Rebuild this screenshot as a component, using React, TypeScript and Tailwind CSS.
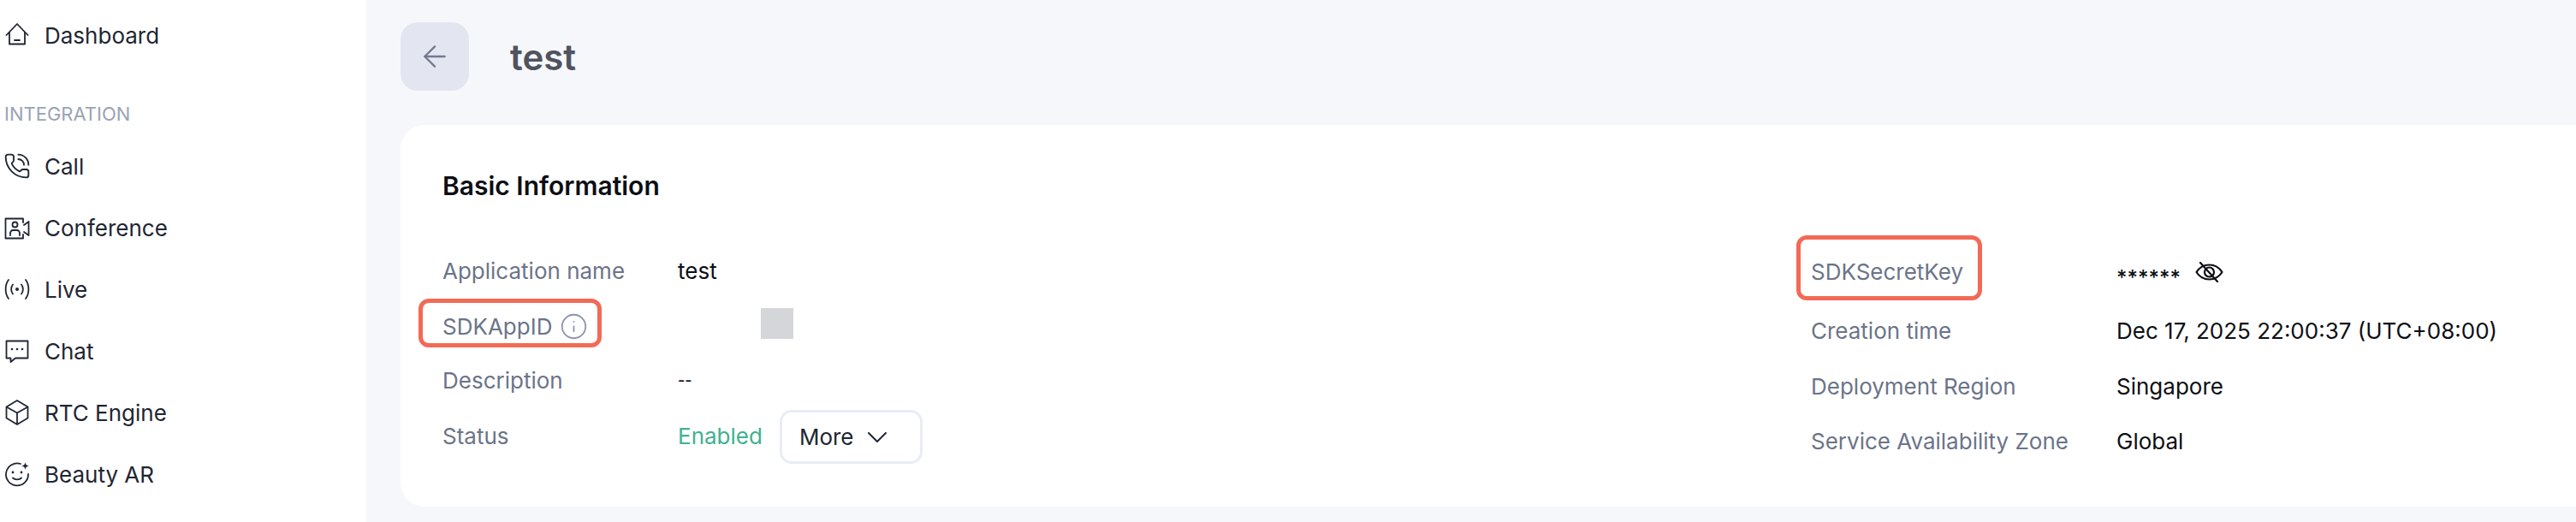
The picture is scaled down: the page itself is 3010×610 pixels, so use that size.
import { ArrowLeft, ChevronDown, Info, PhoneCall } from 'lucide-react';
import type { ReactNode } from 'react';

const ICON = 'w-[30px] h-[30px] shrink-0 text-[#1f2633]';

function HomeIcon() {
    return (
        <svg className={ICON} viewBox="0 0 30 30" fill="none" stroke="currentColor" strokeWidth={1.8} strokeLinejoin="round" strokeLinecap="round">
            <path d="M2.500 15 15 2l12.500 13" />
            <path d="M6 12v13.500h18V12" />
            <path d="M12 21h6" />
        </svg>
    );
}
function CallIcon() {
    return <PhoneCall className="w-[32px] h-[32px] -m-px shrink-0 text-[#1f2633]" strokeWidth={1.4} />;
}
function ConferenceIcon() {
    return (
        <svg className={ICON} viewBox="0 0 30 30" fill="none" stroke="currentColor" strokeWidth={1.8} strokeLinejoin="round" strokeLinecap="round">
            <path d="M22 9V4.500H1.500v23H22V23" />
            <circle cx="12.500" cy="11.500" r="3" />
            <path d="M7 24v-2.500c0-2 1.500-3.500 3-3.500h5c1.500 0 3 1.500 3 3.500V24" />
            <path d="M23 12 28.500 8v16L23 20" />
        </svg>
    );
}
function LiveIcon() {
    return (
        <svg className={ICON} viewBox="0 0 30 30" fill="none" stroke="currentColor" strokeWidth={1.8} strokeLinecap="round">
            <circle cx="15" cy="15" r="2" fill="currentColor" stroke="none" />
            <path d="M10 9.500c-2.500 3-2.500 8 0 11" />
            <path d="M20 9.500c2.500 3 2.500 8 0 11" />
            <path d="M5 4c-4.500 6-4.500 16 0 22" />
            <path d="M25 4c4.500 6 4.500 16 0 22" />
        </svg>
    );
}
function ChatIcon() {
    return (
        <svg className={ICON} viewBox="0 0 30 30" fill="none" stroke="currentColor" strokeWidth={1.8} strokeLinejoin="round">
            <path d="M2.500 3.500h25v20H13L7.500 28v-4.500h-5Z" />
            <circle cx="9" cy="13" r="1.300" fill="currentColor" stroke="none" />
            <circle cx="15" cy="13" r="1.300" fill="currentColor" stroke="none" />
            <circle cx="21" cy="13" r="1.300" fill="currentColor" stroke="none" />
        </svg>
    );
}
function CubeIcon() {
    return (
        <svg className={ICON} viewBox="0 0 30 30" fill="none" stroke="currentColor" strokeWidth={1.8} strokeLinejoin="round">
            <path d="M15 1 27.500 8.500v13L15 29 2.500 21.500v-13Z" />
            <path d="M2.500 8.500 15 15.500l12.500-7" />
            <path d="M15 15.500V29" />
        </svg>
    );
}
function BeautyIcon() {
    return (
        <svg className={ICON} viewBox="0 0 30 30" fill="none" stroke="currentColor" strokeWidth={1.8} strokeLinecap="round">
            <path d="M19 3A13 13 0 1 0 28 15" />
            <path d="M10 19.500c2.500 2.500 7.500 2.500 10 0" />
            <circle cx="10" cy="13" r="1.400" fill="currentColor" stroke="none" />
            <circle cx="20" cy="13" r="1.400" fill="currentColor" stroke="none" />
            <path d="M24.500 1c.5 3 1.500 4 4.500 4.500-3 .5-4 1.500-4.500 4.500-.5-3-1.500-4-4.500-4.500 3-.5 4-1.500 4.500-4.500Z" fill="currentColor" stroke="none" />
        </svg>
    );
}
function EyeOffIcon() {
    return (
        <svg className="w-[33px] h-[24px] shrink-0 text-[#0d0f14]" viewBox="0 0 33 24" fill="none" stroke="currentColor" strokeWidth={2.2} strokeLinejoin="round" strokeLinecap="round">
            <path d="M1.500 12C5 6.500 10 3.500 16.500 3.500S28 6.500 31.500 12C28 17.500 23 20.500 16.500 20.500S5 17.500 1.500 12Z" />
            <circle cx="16.500" cy="12" r="5.500" />
            <path d="M6 1l20 22" />
        </svg>
    );
}

const NAV_GROUP = [
    { label: 'Call', icon: <CallIcon /> },
    { label: 'Conference', icon: <ConferenceIcon /> },
    { label: 'Live', icon: <LiveIcon /> },
    { label: 'Chat', icon: <ChatIcon /> },
    { label: 'RTC Engine', icon: <CubeIcon /> },
    { label: 'Beauty AR', icon: <BeautyIcon /> },
];

function NavItem({ label, icon }: { label: string; icon: ReactNode }) {
    return (
        <div className="h-[72px] flex items-center gap-[17px] pl-[5px] text-[26px] text-[#1f2633]">
            {icon}
            <span>{label}</span>
        </div>
    );
}

function Row({ label, children, labelWidth, className = '' }: { label: ReactNode; children: ReactNode; labelWidth: string; className?: string }) {
    return (
        <div className={`flex items-center h-[65px] text-[26px] text-[#0d0f14] ${className}`}>
            <div className={`shrink-0 text-[#6b7489] ${labelWidth}`}>{label}</div>
            {children}
        </div>
    );
}

// red annotation drawn over the label
function Marked({ children, className }: { children: ReactNode; className: string }) {
    return (
        <span className="relative inline-flex items-center gap-2">
            {children}
            <span className={`absolute border-[5px] border-[#f26a56] rounded-[12px] ${className}`} />
        </span>
    );
}

export default function App() {
    return (
        <div className="w-[3010px] h-[610px] overflow-hidden flex bg-[#f5f7fb] font-['Inter',sans-serif]">
            {/* Sidebar */}
            <aside className="w-[428px] shrink-0 bg-white pt-[5px]">
                <NavItem label="Dashboard" icon={<HomeIcon />} />
                <div className="mt-[38px] pl-[5px] h-[36px] flex items-center text-[22px] text-[#9aa3b5]">INTEGRATION</div>
                <div className="mt-[7px]">
                    {NAV_GROUP.map(n => <NavItem key={n.label} label={n.label} icon={n.icon} />)}
                </div>
            </aside>

            {/* Main */}
            <main className="flex-1 min-w-0 pl-[40px] pt-[26px]">
                <div className="flex items-center gap-[48px] h-[80px]">
                    <button className="w-[80px] h-[80px] rounded-[20px] bg-[#e3e6f0] flex items-center justify-center text-[#727a8e]">
                        <ArrowLeft size={40} strokeWidth={1.4} />
                    </button>
                    <h1 className="text-[42px] font-semibold text-[#50535f]">test</h1>
                </div>

                <section className="mt-[40px] h-[446px] rounded-l-[28px] bg-white pl-[49px] pt-[51px]">
                    <h2 className="text-[30px] leading-[40px] font-semibold text-[#0d0f14]">Basic Information</h2>
                    <div className="mt-[47px] flex">
                        <div className="w-[1599px] shrink-0">
                            <Row label="Application name" labelWidth="w-[275px]">
                                <span>test</span>
                            </Row>
                            <Row
                                label={
                                    <Marked className="-left-[28px] -right-[19px] -top-[13px] -bottom-[5px]">
                                        SDKAppID
                                        <Info className="ml-[1px] -my-[3px] -mr-[3px] text-[#8a93ab]" size={33} strokeWidth={1.3} />
                                    </Marked>
                                }
                                labelWidth="w-[275px]"
                            >
                                <span className="ml-[97px] w-[38px] h-[36px] -mt-[8px] bg-[#d5d6da]" />
                            </Row>
                            <Row label="Description" labelWidth="w-[275px]" className="-mt-[2px]">
                                <span className="text-[18px] font-medium">--</span>
                            </Row>
                            <Row label="Status" labelWidth="w-[275px]">
                                <span className="text-[#3fb28f]">Enabled</span>
                                <button className="ml-[20px] mt-[2px] w-[167px] h-[63px] border-[3px] border-[#e8edf5] rounded-[14px] flex items-center gap-[8px] pl-[20px] text-[#1f2633]">
                                    More <ChevronDown size={40} strokeWidth={1.2} />
                                </button>
                            </Row>
                        </div>
                        <div className="pt-px">
                            <Row
                                label={<Marked className="-left-[17px] -right-[22px] -top-[23px] -bottom-[14px]">SDKSecretKey</Marked>}
                                labelWidth="w-[357px]"
                            >
                                <span className="pt-[15px] text-[24px] font-medium">******</span>
                                <span className="ml-[17px]"><EyeOffIcon /></span>
                            </Row>
                            <Row label="Creation time" labelWidth="w-[357px]" className="mt-[4px]">
                                <span>Dec 17, 2025 22:00:37 (UTC+08:00)</span>
                            </Row>
                            <Row label="Deployment Region" labelWidth="w-[357px]">
                                <span>Singapore</span>
                            </Row>
                            <Row label="Service Availability Zone" labelWidth="w-[357px]" className="-mt-px">
                                <span>Global</span>
                            </Row>
                        </div>
                    </div>
                </section>
            </main>
        </div>
    );
}
